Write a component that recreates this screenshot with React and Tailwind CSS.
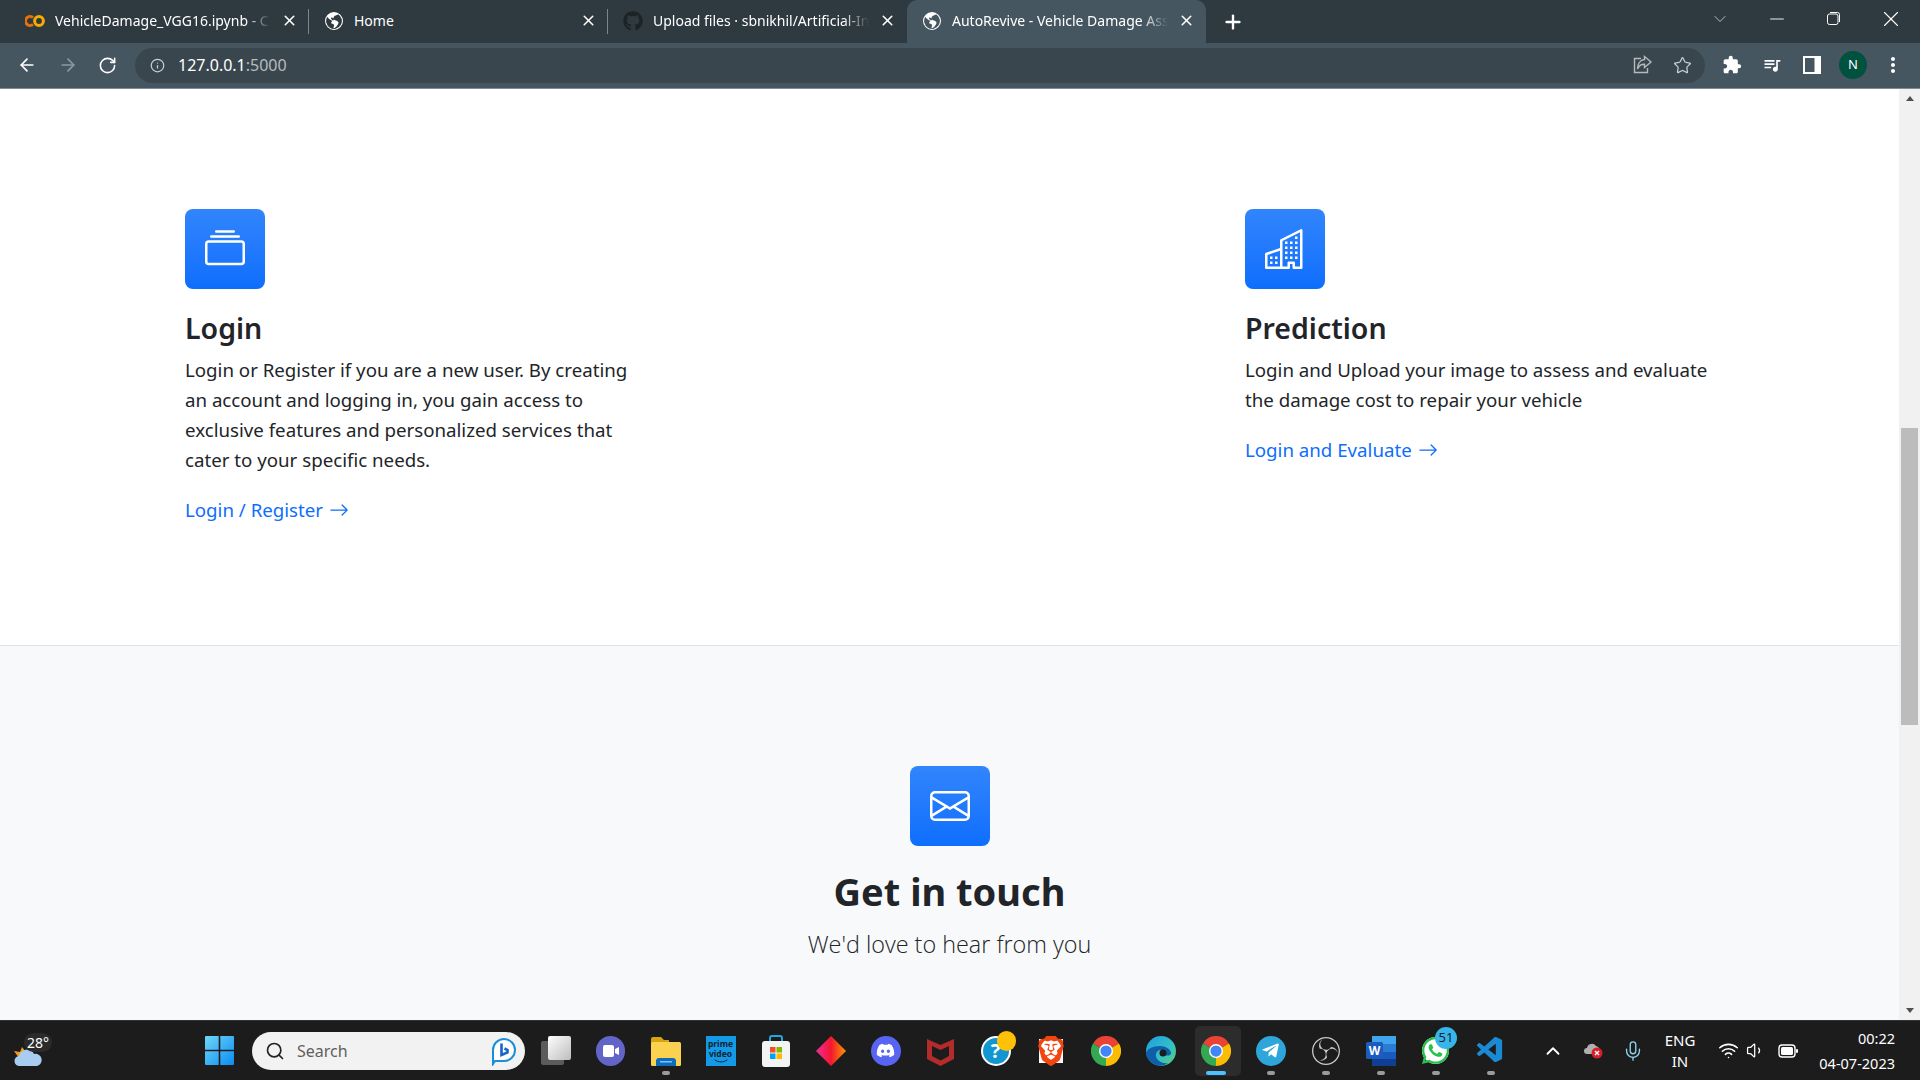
import React from 'react';
import { ArrowLeft, ArrowRight, RotateCw, Info, Star, Minus, X, Plus, ChevronDown, ChevronUp, Search, Mic, Wifi, Volume1 } from 'lucide-react';
import { BsCollection, BsBuildings, BsEnvelope, BsArrowRight, BsGlobeAmericas } from 'react-icons/bs';
import { FaGithub, FaDiscord, FaTelegramPlane, FaWhatsapp } from 'react-icons/fa';
import { MdExtension, MdQueueMusic, MdMoreVert } from 'react-icons/md';
import { SiBrave, SiObsstudio } from 'react-icons/si';
import { VscVscode } from 'react-icons/vsc';

const sans = "font-['Noto_Sans',sans-serif]";

function ColabLogo() {
  return (
    <svg width="20" height="12" viewBox="0 0 20 12" fill="none" stroke="#f9ab00" strokeWidth="3">
      <path d="M8 2.6a4.5 4.5 0 1 0 0 6.8" stroke="#e8710a" />
      <circle cx="14" cy="6" r="4.4" />
    </svg>
  );
}

function Tab({ icon, title, active, fade = true, showSep }) {
  return (
    <div className={`relative flex h-[43px] w-[299px] shrink-0 items-center gap-[10px] pb-[2px] pl-[15px] pr-[11px] ${active ? 'rounded-t-[10px] bg-[#465660]' : ''}`}>
      <div className="flex w-[20px] shrink-0 justify-center">{icon}</div>
      <div className={`min-w-0 flex-1 overflow-hidden whitespace-nowrap text-[14px] text-white ${fade ? '[mask-image:linear-gradient(to_right,black_88%,transparent)]' : ''}`}>
        {title}
      </div>
      <X size={17} strokeWidth={2.2} className="shrink-0 text-white" />
      {showSep && <div className="absolute right-0 top-[9px] h-[25px] w-px bg-[#7b868c]" />}
    </div>
  );
}

function TabBar() {
  return (
    <div className="flex h-[43px] shrink-0 items-center bg-[#2e3940] pl-[10px]">
      <Tab icon={<ColabLogo />} title="VehicleDamage_VGG16.ipynb - C" showSep />
      <Tab icon={<BsGlobeAmericas size={18} className="text-white" />} title="Home" fade={false} showSep />
      <Tab icon={<FaGithub size={20} className="text-[#1c2327]" />} title="Upload files · sbnikhil/Artificial-In" />
      <Tab icon={<BsGlobeAmericas size={18} className="text-white" />} title="AutoRevive - Vehicle Damage Ass" active />
      <Plus size={22} strokeWidth={2.6} className="ml-[16px] text-white" />
      <div className="mb-[6px] ml-auto flex items-center">
        <ChevronDown size={20} strokeWidth={1} className="mr-[36px] text-[#d5d9db]" />
        <Minus size={22} strokeWidth={1} className="mr-[39px] text-white" />
        <svg width="13" height="13" viewBox="0 0 13 13" fill="none" stroke="white" className="mr-[38px]">
          <rect x="0.5" y="2" width="10.5" height="10.5" rx="2" />
          <path d="M3 .5h7.5a2 2 0 0 1 2 2V10" />
        </svg>
        <X size={26} strokeWidth={1} className="mr-[16px] text-white" />
      </div>
    </div>
  );
}

function ShareIcon() {
  return (
    <svg width="20" height="20" viewBox="0 0 20 20" fill="none" stroke="#b4babd" strokeWidth="1.4">
      <path d="M8 3.5H1.5v14h13V13" />
      <path d="M11.5 1.5 18 7l-6.5 5.5V9.2C8.5 9 6 10.5 4.5 14c0-5 2.5-9 7-9.5z" />
    </svg>
  );
}

function Toolbar() {
  return (
    <div className="flex h-[46px] shrink-0 items-center border-b border-[#7f8c93] bg-[#465660] pb-[1px]">
      <ArrowLeft size={20} strokeWidth={2} className="ml-[17px] text-white" />
      <ArrowRight size={20} strokeWidth={2} className="ml-[21px] text-[#8e999f]" />
      <RotateCw size={19} strokeWidth={2} className="ml-[20px] text-white" />
      <div className="ml-[18px] flex h-[35px] w-[1570px] items-center rounded-full bg-[#3a464e] pl-[15px] pr-[13px]">
        <Info size={15} strokeWidth={2} className="text-[#c8cdd0]" />
        <div className="ml-[13px] text-[16px] text-white">
          127.0.0.1<span className="text-[#b5bcc0]">:5000</span>
        </div>
        <div className="ml-auto flex items-center gap-[20px]">
          <ShareIcon />
          <Star size={19} strokeWidth={1.6} className="text-[#c8cdd0]" />
        </div>
      </div>
      <div className="ml-[17px] flex items-center gap-[20px]">
        <MdExtension size={20} className="text-white" />
        <MdQueueMusic size={20} className="text-white" />
        <svg width="18" height="18" viewBox="0 0 18 18" className="ml-px shrink-0">
          <rect width="18" height="18" fill="white" />
          <rect x="2" y="2" width="9.5" height="14" fill="#465660" />
        </svg>
      </div>
      <div className="ml-[18px] flex h-[28px] w-[28px] items-center justify-center rounded-full bg-[#00513f] text-[13px] text-white">N</div>
      <MdMoreVert size={24} className="ml-[14px] text-white" />
    </div>
  );
}

function FeatureIcon({ children, className = '' }) {
  return (
    <div className={`flex h-[80px] w-[80px] items-center justify-center rounded-[8px] bg-gradient-to-b from-[#3185fc] to-[#0d6efd] text-white ${className}`}>
      {children}
    </div>
  );
}

function Feature({ icon, title, text, link, className = '' }) {
  return (
    <div className={className}>
      <FeatureIcon>{icon}</FeatureIcon>
      <h2 className="mt-[19px] text-[28.5px] font-semibold leading-[40px] text-[#212529]">{title}</h2>
      <p className="mt-[7px] text-[18.7px] leading-[30px] text-[#212529]">{text}</p>
      <a className="mt-[20px] flex items-center gap-[6px] text-[18.7px] leading-[30px] text-[#0d6efd]">
        {link}
        <BsArrowRight size={20} />
      </a>
    </div>
  );
}

function PageContent() {
  return (
    <div className="flex min-w-0 flex-1 flex-col bg-white">
      <section className="grid h-[557px] shrink-0 grid-cols-[1060px_1fr] border-b border-[#dee2e6] pl-[185px] pt-[120px]">
        <Feature
          className="w-[465px]"
          icon={<BsCollection size={40} />}
          title="Login"
          text="Login or Register if you are a new user. By creating an account and logging in, you gain access to exclusive features and personalized services that cater to your specific needs."
          link="Login / Register"
        />
        <Feature
          className="w-[465px]"
          icon={<BsBuildings size={40} />}
          title="Prediction"
          text="Login and Upload your image to assess and evaluate the damage cost to repair your vehicle"
          link="Login and Evaluate"
        />
      </section>
      <section className="flex flex-1 flex-col items-center bg-[#f8f9fa] pt-[120px]">
        <FeatureIcon>
          <BsEnvelope size={40} />
        </FeatureIcon>
        <h2 className="mt-[21px] text-[38px] font-bold leading-[48px] text-[#212529]">Get in touch</h2>
        <p className="mt-[11px] font-['Open_Sans',sans-serif] text-[23.4px] font-light leading-[36px] text-[#212529]">We'd love to hear from you</p>
      </section>
    </div>
  );
}

function Scrollbar() {
  return (
    <div className="flex w-[21px] shrink-0 flex-col items-center bg-[#f1f1f1]">
      <div className="mt-[7px] h-0 w-0 border-x-[4.5px] border-b-[5px] border-x-transparent border-b-[#505050]" />
      <div className="mt-[327px] h-[297px] w-[17px] bg-[#bcbcbc]" />
      <div className="mt-auto mb-[7px] h-0 w-0 border-x-[4.5px] border-t-[5px] border-x-transparent border-t-[#505050]" />
    </div>
  );
}

function ChromeLogo({ size = 30 }) {
  return (
    <svg width={size} height={size} viewBox="0 0 24 24">
      <path d="M12 12 1.6 6A12 12 0 0 1 22.4 6z" fill="#ea4335" />
      <path d="M12 12 22.4 6A12 12 0 0 1 12 24z" fill="#fbbc04" />
      <path d="M12 12 12 24A12 12 0 0 1 1.6 6z" fill="#34a853" />
      <circle cx="12" cy="12" r="5.6" fill="white" />
      <circle cx="12" cy="12" r="4.5" fill="#4285f4" />
    </svg>
  );
}

function TaskItem({ children, mark, active }) {
  return (
    <div className={`relative flex h-[50px] w-[55px] shrink-0 items-center justify-center`}>
      {active && <div className="absolute inset-y-0 left-[7px] right-[2px] rounded-[5px] bg-[#2c2c2c]" />}
      <div className="relative flex items-center justify-center">{children}</div>
      {mark && <div className="absolute bottom-[1px] left-1/2 h-[4px] w-[8px] -translate-x-1/2 rounded-full bg-[#9b9b9b]" />}
      {active && <div className="absolute bottom-[1px] left-1/2 h-[4px] w-[20px] -translate-x-1/2 rounded-full bg-[#4cc2ff]" />}
    </div>
  );
}

function Taskbar() {
  return (
    <div className="flex h-[60px] shrink-0 items-center border-t border-[#333] bg-[#1c1c1c] text-white">
      {/* weather */}
      <div className="relative ml-[13px] h-[36px] w-[39px] shrink-0">
        <svg width="30" height="22" viewBox="0 0 30 22" className="absolute left-0 top-[12px]">
          <path d="M1 6l6 1 2-5 4 5-7 6z" fill="#f29a1f" />
          <path d="M7 21a5 5 0 0 1-1-10 8 8 0 0 1 15-2 6 6 0 0 1 3 12z" fill="#a9cdf0" />
        </svg>
        <div className="absolute left-[11px] top-0 rounded-full bg-[#2b2b2b] px-[3px] text-[14px] leading-[19px]">28°</div>
      </div>
      {/* start */}
      <svg width="29" height="29" viewBox="0 0 29 29" className="ml-[153px] shrink-0">
        <defs>
          <linearGradient id="win" x1="0" y1="0" x2="1" y2="1">
            <stop offset="0" stopColor="#6fd6f8" />
            <stop offset="1" stopColor="#0b8cf2" />
          </linearGradient>
        </defs>
        <path d="M0 1a1 1 0 0 1 1-1h12.7v13.7H0zM15.3 0H28a1 1 0 0 1 1 1v12.7H15.3zM0 15.3h13.7V29H1a1 1 0 0 1-1-1zM15.3 15.3H29V28a1 1 0 0 1-1 1H15.3z" fill="url(#win)" />
      </svg>
      {/* search */}
      <div className="ml-[18px] flex h-[38px] w-[273px] shrink-0 items-center rounded-full bg-[#f2f2f2] pl-[13px] pr-[8px] text-[#5f5f5f]">
        <Search size={20} strokeWidth={2} className="text-[#222]" />
        <span className="ml-[12px] text-[16px]">Search</span>
        <svg width="26" height="30" viewBox="0 0 26 30" fill="none" className="ml-auto">
          <path d="M13 3a11 11 0 0 1 0 22H4l-2 3V14A11 11 0 0 1 13 3z" stroke="#1a8fd8" strokeWidth="2" fill="white" />
          <path d="M10.500 7.500V19l6-2.500v-2.500l-3-1.500" stroke="#1467c8" strokeWidth="2.600" />
        </svg>
      </div>
      {/* apps */}
      <div className="ml-[3px] flex items-center">
        <TaskItem>
          <div className="relative h-[29px] w-[30px]">
            <div className="absolute bottom-0 left-0 h-[24px] w-[23px] rounded-[2px] bg-[#5b5b5b]" />
            <div className="absolute right-0 top-0 h-[24px] w-[23px] rounded-[2px] bg-gradient-to-br from-white to-[#bdbdbd]" />
          </div>
        </TaskItem>
        <TaskItem>
          <div className="flex h-[30px] w-[29px] items-center justify-center rounded-full bg-[#6264c8]">
            <svg width="16" height="12" viewBox="0 0 16 12" fill="white">
              <rect width="11" height="12" rx="2" />
              <path d="M12 4l4-2v8l-4-2z" />
            </svg>
          </div>
        </TaskItem>
        <TaskItem mark>
          <svg width="30" height="30" viewBox="0 0 30 30">
            <path d="M0 3a2 2 0 0 1 2-2h8l3 3h5v4H0z" fill="#d9a412" />
            <rect y="6" width="30" height="24" rx="1.500" fill="#fbd24f" />
            <path d="M5 30v-5a3 3 0 0 1 3-3h14a3 3 0 0 1 3 3v5z" fill="#0f6cbd" />
            <rect x="9" y="25" width="12" height="1.500" fill="#7cc4f5" />
          </svg>
        </TaskItem>
        <TaskItem>
          <div className="flex h-[30px] w-[30px] flex-col items-center justify-center bg-[#1399e6] text-[8.5px] font-bold leading-[10px] text-[#10232f]">
            <span>prime</span>
            <span>video</span>
            <svg width="18" height="4" viewBox="0 0 18 5" fill="none" stroke="#10232f" strokeWidth="1.200">
              <path d="M1 1c5 3.500 11 3.500 16 0" />
            </svg>
          </div>
        </TaskItem>
        <TaskItem>
          <svg width="30" height="32" viewBox="0 0 30 32">
            <path d="M9 6V3a2 2 0 0 1 2-2h8a2 2 0 0 1 2 2v3" stroke="#22a7dc" strokeWidth="2" fill="none" />
            <rect x="1" y="6" width="28" height="26" rx="3" fill="#f3f3f3" />
            <rect x="9" y="12" width="5.500" height="5.500" fill="#f25022" />
            <rect x="15.500" y="12" width="5.500" height="5.500" fill="#7fba00" />
            <rect x="9" y="18.500" width="5.500" height="5.500" fill="#00a4ef" />
            <rect x="15.500" y="18.500" width="5.500" height="5.500" fill="#ffb900" />
          </svg>
        </TaskItem>
        <TaskItem>
          <svg width="30" height="30" viewBox="0 0 30 30">
            <defs>
              <linearGradient id="gem" x1="0" y1="0" x2="1" y2="0">
                <stop offset="0" stopColor="#f02c9a" />
                <stop offset="0.5" stopColor="#f5162f" />
                <stop offset="1" stopColor="#f79a00" />
              </linearGradient>
            </defs>
            <path d="M15 0 30 15 15 30 0 15z" fill="url(#gem)" />
          </svg>
        </TaskItem>
        <TaskItem>
          <div className="flex h-[30px] w-[30px] items-center justify-center rounded-full bg-[#5865f2]">
            <FaDiscord size={19} className="text-white" />
          </div>
        </TaskItem>
        <TaskItem>
          <svg width="27" height="30" viewBox="0 0 27 30">
            <path d="M0 3 13.500 9 27 3v20L13.500 30 0 23z" fill="#b32b2b" />
            <path d="M5 10l8.500 4 8.500-4v10l-8.500 4.500L5 20z" fill="#1c1c1c" />
          </svg>
        </TaskItem>
        <TaskItem>
          <div className="relative flex h-[30px] w-[30px] items-center justify-center rounded-full border-2 border-white bg-[#1296d2] text-[20px] font-bold leading-none text-white">
            ?
            <div className="absolute -right-[7px] -top-[7px] h-[20px] w-[19px] rounded-full bg-[#ffc107]" />
          </div>
        </TaskItem>
        <TaskItem>
          <div className="relative">
            <div className="absolute inset-[3px] bg-white" />
            <SiBrave size={30} className="relative text-[#f1460f]" />
          </div>
        </TaskItem>
        <TaskItem>
          <ChromeLogo />
        </TaskItem>
        <TaskItem>
          <svg width="30" height="30" viewBox="0 0 30 30">
            <defs>
              <linearGradient id="edge" x1="0" y1="0" x2="1" y2="1">
                <stop offset="0" stopColor="#1b9de2" />
                <stop offset="0.6" stopColor="#35c1c4" />
                <stop offset="1" stopColor="#5ed16b" />
              </linearGradient>
            </defs>
            <circle cx="15" cy="15" r="15" fill="url(#edge)" />
            <path d="M14 10c7 0 11 4 11 7s-4 3-6 2c2-5-8-8-9-1-1 6 6 10 12 9a15 15 0 0 1-8 3C5 29 0 22 0 17 1 13 7 10 14 10z" fill="#0f5fa8" />
            <circle cx="17" cy="17" r="3.500" fill="#1c1c1c" />
          </svg>
        </TaskItem>
        <TaskItem active>
          <ChromeLogo />
        </TaskItem>
        <TaskItem mark>
          <div className="flex h-[30px] w-[30px] items-center justify-center rounded-full bg-[#2ea6d9]">
            <FaTelegramPlane size={19} className="text-white" />
          </div>
        </TaskItem>
        <TaskItem mark>
          <SiObsstudio size={28} className="text-[#c9c9c9]" />
        </TaskItem>
        <TaskItem mark>
          <svg width="30" height="30" viewBox="0 0 30 30">
            <rect x="6" y="0" width="24" height="8" fill="#41a5ee" />
            <rect x="6" y="8" width="24" height="8" fill="#2b7cd3" />
            <rect x="6" y="16" width="24" height="7" fill="#185abd" />
            <rect x="6" y="23" width="24" height="7" fill="#103f91" />
            <rect x="0" y="6" width="17" height="17" rx="1.500" fill="#1a5cc0" />
            <text x="8.500" y="19" textAnchor="middle" fontSize="12" fontWeight="700" fill="white" fontFamily="Noto Sans, sans-serif">W</text>
          </svg>
        </TaskItem>
        <TaskItem mark>
          <div className="relative">
            <div className="absolute inset-[2px] rounded-full bg-white" />
            <FaWhatsapp size={31} className="relative text-[#27c24c]" />
            <div className="absolute -right-[6px] -top-[8px] flex h-[22px] w-[22px] items-center justify-center rounded-full bg-[#38b6ea] text-[13px] text-[#10232f]">51</div>
          </div>
        </TaskItem>
        <TaskItem mark>
          <VscVscode size={31} className="text-[#1a8ad4]" />
        </TaskItem>
      </div>
      {/* tray */}
      <ChevronUp size={22} strokeWidth={2} className="ml-[24px] text-white" />
      <svg width="19" height="17" viewBox="0 0 19 17" className="ml-[20px]">
        <path d="M3 12a3 3 0 0 1 0-6 5 5 0 0 1 9-2 4 4 0 0 1 3 6v2z" fill="#b0b0b0" />
        <circle cx="13" cy="11" r="5.500" fill="#d5202a" />
        <path d="M11 9l4 4M15 9l-4 4" stroke="white" strokeWidth="1.300" />
      </svg>
      <Mic size={22} strokeWidth={1.5} className="ml-[19px] text-[#8bd3ec]" />
      <div className="ml-[20px] w-[32px] text-center text-[15px] leading-[21px]">ENG<br />IN</div>
      <Wifi size={21} strokeWidth={1.8} className="ml-[22px] text-white" />
      <Volume1 size={19} strokeWidth={1.6} className="ml-[7px] text-white" />
      <svg width="20" height="14" viewBox="0 0 20 14" fill="none" className="ml-[13px]">
        <rect x="1" y="1" width="16" height="12" rx="3" stroke="white" strokeWidth="1.400" />
        <rect x="3" y="3" width="12" height="8" rx="1.500" fill="white" />
        <rect x="18" y="5" width="2" height="4" rx="1" fill="white" />
      </svg>
      <div className="ml-auto mr-[25px] text-right text-[14.5px] leading-[25px]">
        <div>00:22</div>
        <div>04-07-2023</div>
      </div>
    </div>
  );
}

export default function App() {
  return (
    <div className={`flex h-screen w-full flex-col overflow-hidden ${sans}`}>
      <TabBar />
      <Toolbar />
      <div className="flex min-h-0 flex-1">
        <PageContent />
        <Scrollbar />
      </div>
      <Taskbar />
    </div>
  );
}
